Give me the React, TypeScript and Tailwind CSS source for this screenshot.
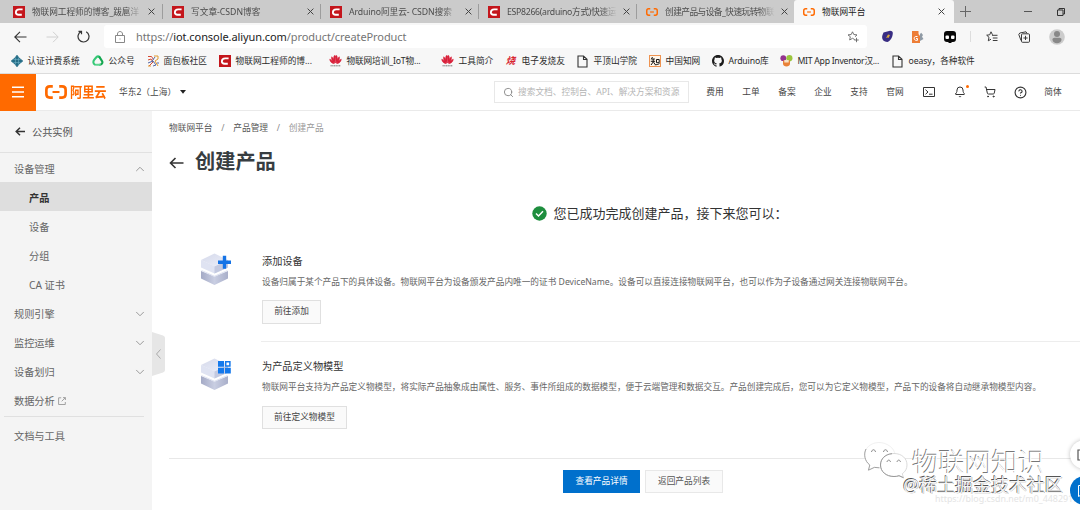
import React from "react";
import { ChevronDown, ChevronUp, Search, Bell, ShoppingCart, CircleHelp } from "lucide-react";

const CsdnIcon = () => (
  <svg width="12" height="12" viewBox="0 0 12 12" className="shrink-0">
    <rect width="12" height="12" fill="#c4161c" />
    <path d="M9.6 3.400H6.200C4.300 3.400 3 4.600 2.900 6.200c-.1 1.600.9 2.500 2.600 2.500h3.300" fill="none" stroke="#fff" strokeWidth="1.900" />
  </svg>
);

const AliMark = ({ w = 12, h = 8 }: { w?: number; h?: number }) => (
  <svg width={w} height={h} viewBox="0 0 24 15" preserveAspectRatio="none" className="shrink-0" fill="none" stroke="#ff6a00">
    <path d="M8.500 1.500H5.300C3 1.500 1.500 2.900 1.500 5v5c0 2.100 1.500 3.500 3.800 3.500h3.200" strokeWidth="2.900" />
    <path d="M15.500 1.500h3.200c2.300 0 3.800 1.400 3.800 3.500v5c0 2.100-1.500 3.500-3.800 3.500h-3.200" strokeWidth="2.900" />
    <path d="M8.200 7.500h7.600" strokeWidth="2.200" />
  </svg>
);

const CloseIcon = () => (
  <svg width="7" height="7" viewBox="0 0 7 7" className="shrink-0" stroke="#444" strokeWidth="1">
    <path d="M.6.6l5.800 5.800M6.400.6L.6 6.400" />
  </svg>
);

const PageIcon = () => (
  <svg width="11" height="13" viewBox="0 0 11 13" fill="none" stroke="#333" strokeWidth="1.100">
    <path d="M1 1h5.500L10 4.300V12H1zM6.500 1v3.500H10" />
  </svg>
);

const HuaweiIcon = () => (
  <svg width="13" height="12" viewBox="0 0 13 12" fill="#d9213a">
    <path d="M6.200 8C4.600 5.600 4.100 2.300 5.300.6c.7-.2 1 0 1.100.5zM6.800 8c1.600-2.400 2.100-5.700.9-7.400-.7-.2-1 0-1.100.5zM5.600 8.200C3.300 6.500 2 4 2.600 1.800c1.300.3 2.700 3 3 6.400zM7.400 8.200c2.300-1.700 3.600-4.200 3-6.400-1.300.3-2.700 3-3 6.400zM5.200 8.700C2.500 8.200.8 6.400.7 4.200c1.600.2 3.700 2 4.500 4.500zM7.800 8.700c2.700-.5 4.400-2.300 4.500-4.500-1.600.2-3.700 2-4.500 4.500z" stroke="#d9213a" strokeWidth=".5" />
    <path d="M1.500 10.800h10" stroke="#777" strokeWidth="1" strokeDasharray="1.300 .4" />
  </svg>
);

const LotIcon = () => (
  <svg width="12" height="12" viewBox="0 0 12 12">
    <path d="M6 .3L8 3l3.700 3L8 9 6 11.700 4 9 .3 6 4 3z" fill="#246c86" stroke="#246c86" />
    <path d="M2.500 4.400h7M2.500 7.600h7M4.400 2.500v7M7.600 2.500v7" stroke="#75b5c8" strokeWidth=".6" />
  </svg>
);

const GreenIcon = () => (
  <svg width="12" height="12" viewBox="0 0 12 12" fill="none" strokeWidth="2.100" strokeLinecap="round">
    <path d="M3 9.600C.8 8.500 1 6 2.400 4.500L4.600 2C5.500 1 6.700 1.200 7.500 2.200" stroke="#35c876" />
    <path d="M7.500 2.200l2.400 3.600c1.300 2-.1 4-2.100 4" stroke="#14a650" />
    <path d="M7.800 9.800H4.500" stroke="#5bd58e" />
  </svg>
);

const BreadIcon = () => (
  <svg width="12" height="12" viewBox="0 0 12 12" fill="none" strokeWidth="1">
    <path d="M1 1.500h3.500l2 3M1 5l3-1 2 3-4 4" stroke="#d64a34" />
    <path d="M7 1h4v3L8 6l3 5M1 11h3" stroke="#e19a2e" />
    <path d="M1 8l5-2 3 4-3 1M8 2l-3 4M11 7v2" stroke="#5268a8" />
  </svg>
);

const ShaoIcon = () => <span className="text-[9.5px] leading-none font-bold text-[#d8232f] italic">烧</span>;

const CnkiIcon = () => (
  <svg width="12" height="12" viewBox="0 0 12 12" fill="none">
    <rect x=".5" y=".5" width="11" height="11" fill="#fff6ea" stroke="#ee9350" />
    <path d="M3.500 2L2.300 4.300M2.500 4h3.400M1.800 6.300h4.300M4.200 4v3L2 10M4.600 7.200l1.500 2.300M7.500 4.500h2.700v3.200H7.500zM5.800 9.800c2 0 3-.3 4.700-1.200" stroke="#151515" strokeWidth="1" />
  </svg>
);

const GithubIcon = () => (
  <svg width="12" height="12" viewBox="0 0 16 16" fill="#1b1b1b">
    <path d="M8 0C3.580 0 0 3.580 0 8c0 3.540 2.290 6.530 5.470 7.590.4.070.55-.17.55-.38v-1.490c-2.230.48-2.700-1.070-2.700-1.070-.36-.92-.89-1.170-.89-1.170-.73-.5.050-.49.050-.49.8.060 1.230.83 1.230.83.71 1.220 1.870.87 2.330.66.070-.51.280-.87.5-1.070-1.770-.2-3.640-.89-3.640-3.950 0-.87.31-1.590.82-2.150-.08-.2-.36-1.020.08-2.120 0 0 .67-.21 2.200.82a7.600 7.600 0 0 1 4 0c1.530-1.040 2.200-.82 2.200-.82.44 1.100.16 1.920.08 2.120.51.560.82 1.270.82 2.150 0 3.070-1.870 3.750-3.650 3.950.29.250.54.730.54 1.480v2.200c0 .21.150.46.550.38A8 8 0 0 0 16 8c0-4.420-3.580-8-8-8z" />
  </svg>
);

const MitIcon = () => (
  <svg width="13" height="12" viewBox="0 0 13 12">
    <circle cx="3.300" cy="3.200" r="2.900" fill="#93338f" />
    <circle cx="9.400" cy="3.200" r="3.100" fill="#9bc53d" />
    <path d="M3 5.500h7v3.300c0 3.700-7 3.700-7 0z" fill="#e98238" />
    <path d="M4.300 5h4.400v2.500H4.300z" fill="#f6e2c9" />
  </svg>
);

const tabs = [
  { title: "物联网工程师的博客_跋扈洋", icon: <CsdnIcon />, cls: "w-[159px]", fit: "tracking-[-0.08px]" },
  { title: "写文章-CSDN博客", icon: <CsdnIcon />, cls: "w-[158px]", fit: "" },
  { title: "Arduino阿里云- CSDN搜索", icon: <CsdnIcon />, cls: "w-[158px]", fit: "tracking-[-0.08px]" },
  { title: "ESP8266(arduino方式)快速运", icon: <CsdnIcon />, cls: "w-[158px]", fit: "tracking-[-0.28px]" },
  { title: "创建产品与设备_快速玩转物联", icon: <AliMark />, cls: "w-[157px]", fit: "tracking-[-0.55px]" },
];

const bookmarks = [
  { label: "认证计费系统", icon: <LotIcon />, cls: "w-[81px]" },
  { label: "公众号", icon: <GreenIcon />, cls: "w-[55px]" },
  { label: "面包板社区", icon: <BreadIcon />, cls: "w-[72px]" },
  { label: "物联网工程师的博...", icon: <CsdnIcon />, cls: "w-[111px]" },
  { label: "物联网培训_IoT物...", icon: <HuaweiIcon />, cls: "w-[112px] tracking-[-0.15px]" },
  { label: "工具简介", icon: <HuaweiIcon />, cls: "w-[63px]" },
  { label: "电子发烧友", icon: <ShaoIcon />, cls: "w-[72px]" },
  { label: "平顶山学院", icon: <PageIcon />, cls: "w-[72px]" },
  { label: "中国知网", icon: <CnkiIcon />, cls: "w-[63px]" },
  { label: "Arduino库", icon: <GithubIcon />, cls: "w-[69px] tracking-[-0.15px]" },
  { label: "MIT App Inventor汉...", icon: <MitIcon />, cls: "w-[111px] tracking-[-0.28px]" },
  { label: "oeasy，各种软件", icon: <PageIcon />, cls: "w-[100px] tracking-[-0.1px]" },
];

function TabStrip() {
  return (
    <div className="flex h-[23px] bg-[#cbcbcb] pl-1 text-[8.7px] text-[#4c4c4c]">
      {tabs.map((t, i) => (
        <div key={t.title} className={`flex h-full items-center pl-[9px] ${t.cls}`}>
          {t.icon}
          <div className={`ml-[7px] w-[110px] leading-4 whitespace-nowrap [mask-image:linear-gradient(90deg,#000_85%,transparent)] ${t.fit}`}>{t.title}</div>
          <div className="ml-[6px]"><CloseIcon /></div>
          {i < 4 && <div className="ml-auto h-[15px] w-px bg-[#9d9d9d]" />}
        </div>
      ))}
      <div className="flex h-full w-[160px] items-center rounded-t-[3px] bg-[#f7f7f7] pl-[9px] text-[#222]">
        <AliMark />
        <div className="ml-[7px] w-[109px] leading-4">物联网平台</div>
        <div className="ml-[7px]"><CloseIcon /></div>
      </div>
      <div className="flex flex-1 items-center">
        <svg width="11" height="11" viewBox="0 0 11 11" className="ml-[6px]" stroke="#666"><path d="M5.500 0v11M0 5.500h11" /></svg>
        <svg width="8" height="8" viewBox="0 0 8 8" className="ml-[53px]" stroke="#555"><path d="M0 3.500h8" /></svg>
        <svg width="8" height="8" viewBox="0 0 8 8" className="ml-[25px]" fill="none" stroke="#333"><path d="M.5 2h5.500v5.500H.5zM2 2V.5h5.500V6H6" /></svg>
      </div>
    </div>
  );
}

function AddressBar() {
  return (
    <div className="flex h-[27px] items-center bg-[#f7f7f7]">
      <svg width="13" height="12" viewBox="0 0 13 12" className="ml-[14px]" fill="none" stroke="#333" strokeWidth="1.100"><path d="M12.500 6H1M6 .8L.8 6 6 11.200" /></svg>
      <svg width="13" height="12" viewBox="0 0 13 12" className="ml-[19px]" fill="none" stroke="#d0d0d0"><path d="M.5 6H12M7 .8L12.200 6 7 11.200" /></svg>
      <svg width="13" height="13" viewBox="0 0 13 13" className="ml-[18px]" fill="none" stroke="#333" strokeWidth="1.200"><path d="M4 1.600A5.500 5.500 0 1 0 9.200 1.700M1.500 1.300h3v3" /></svg>
      <div className="ml-[14px] flex h-[23px] w-[763px] items-center rounded-[3px] bg-white">
        <svg width="10" height="12" viewBox="0 0 10 12" className="ml-[11px]" fill="none" stroke="#888"><path d="M.5 4.500h9v7h-9zM2.500 4.500V3c0-3.300 5-3.300 5 0v1.500M4.500 8h1" /></svg>
        <div className="ml-[11px] w-[705px] text-[11px] leading-4 tracking-[-0.08px] text-[#757575]">https://<span className="text-[#222]">iot.console.aliyun.com</span>/product/createProduct</div>
        <svg width="12" height="12" viewBox="0 0 12 12" className="ml-[6px]" fill="none" stroke="#666" strokeWidth=".9"><path d="M7.800 8.600L5.500 7.300 2.700 9l.6-3.300L1 3.900l3.200-.4L5.500.8l1.300 2.700 3.200.4-2 1.800M9.500 6.800v4.400M7.300 9h4.400" /></svg>
      </div>
      <svg width="13" height="13" viewBox="0 0 13 13" className="ml-[14px]"><path d="M2.500 2.500L9 .8c2 0 3 1 2.800 2.700-.2 3.500-2.300 7.500-5.300 8.500C2 11.700.3 8.700 1.500 5z" fill="#392d83" /><path d="M7 4.500l2 .5-1.500 3-1-.5-1.500.5z" fill="#d9a93b" /></svg>
      <svg width="12" height="12" viewBox="0 0 12 12" className="ml-[18px]"><path d="M0 0h6.500v3L8 5v7H0z" fill="#ed7d36" /><path d="M5.500 5.500H3.800c-2.200 0-2.200 3.800 0 3.800h1.700V7.500H4" fill="none" stroke="#fff" /><path d="M8 3l1.200-1.200L11 4l-1 1.800L11.500 8 8 10z" fill="#8f9aa5" /></svg>
      <svg width="12" height="12" viewBox="0 0 12 12" className="ml-[20px]"><rect width="12" height="11" rx="3" fill="#080808" /><rect x="1.500" y="4.500" width="3.500" height="3.500" rx="1" fill="#fff" /><rect x="7" y="4.500" width="3.500" height="3.500" rx="1" fill="#fff" /><path d="M4.500 10.500h3V12h-3z" fill="#080808" /></svg>
      <div className="ml-[14px] h-[11px] w-px bg-[#ddd]" />
      <svg width="12" height="12" viewBox="0 0 12 12" className="ml-[15px]" fill="none" stroke="#333" strokeWidth=".95"><path d="M6.500 3.800L5 .8 3.700 3.800.7 4.200 3 6.300l-.7 3.500L5 8.200M6 4.300h5.500M6.800 7h4.700M6.800 9.500h4.700" /></svg>
      <svg width="12" height="12" viewBox="0 0 12 12" className="ml-[20px]" fill="none" stroke="#333" strokeWidth=".95"><rect x="3.500" y="2.800" width="8" height="8.500" rx="1" /><path d="M3 9.500L.8 3.500l1-1.500L8 .8l1 1.500M7.500 4.800V9M5.400 7h4.200" /></svg>
      <svg width="16" height="16" viewBox="0 0 16 16" className="ml-[19px]"><circle cx="8" cy="8" r="7.800" fill="#ccc" /><circle cx="8" cy="5" r="3" fill="#888" /><path d="M3.500 10.500c0-1 .8-1.700 2-1.700h5c1.200 0 2 .7 2 1.700 0 5-9 5-9 0z" fill="#888" /></svg>
    </div>
  );
}

function Bookmarks() {
  return (
    <div className="flex h-[24px] items-center border-b border-[#dcdcdc] bg-[#f7f7f7] pb-px pl-[10px] text-[8.7px] text-[#2b2b2b]">
      {bookmarks.map((b) => (
        <div key={b.label} className={`flex shrink-0 items-center whitespace-nowrap ${b.cls}`}>
          <span className="flex w-[13px] shrink-0 justify-center">{b.icon}</span>
          <span className="ml-[4.5px] leading-4">{b.label}</span>
        </div>
      ))}
    </div>
  );
}

function ConsoleHeader() {
  return (
    <header className="flex h-[37px] items-center border-b border-[#eaeaea] bg-white text-[8.7px] text-[#444]">
      <div className="flex h-[37px] w-9 items-center justify-center bg-[#ff6a00]">
        <svg width="12" height="12" viewBox="0 0 12 12" stroke="#fff" strokeWidth="1.500"><path d="M0 1.200h12M0 6h12M0 10.800h12" /></svg>
      </div>
      <div className="ml-[9px] flex w-[74px] items-center">
        <AliMark w={22} h={14} />
        <span className="ml-[3px] scale-y-115 text-[12.2px] leading-4 font-semibold whitespace-nowrap text-[#ff6a00]">阿里云</span>
      </div>
      <span className="w-[61px] leading-4 whitespace-nowrap">华东2（上海）</span>
      <svg width="6" height="4" viewBox="0 0 6 4"><path d="M0 0h6L3 3.800z" fill="#222" /></svg>
      <div className="ml-[308px] flex h-[22px] w-[195px] items-center border border-[#e8e8e8] pl-2">
        <Search size={11} color="#888" strokeWidth={2} />
        <span className="ml-[4px] leading-4 whitespace-nowrap text-[#b5b5b5]">搜索文档、控制台、API、解决方案和资源</span>
      </div>
      <nav className="ml-[8px] flex">
        {["费用", "工单", "备案", "企业", "支持", "官网"].map((n) => (
          <span key={n} className="w-9 text-center leading-4">{n}</span>
        ))}
      </nav>
      <div className="ml-[1px] grid w-[122px] grid-cols-4 place-items-center">
        <svg width="12" height="10" viewBox="0 0 12 10" fill="none" stroke="#333"><path d="M.5.5h11v9H.5zM2.500 2.700L5 5 2.500 7.300M6 7.200h3.500" /></svg>
        <div className="relative">
          <Bell size={12} color="#333" strokeWidth={2} />
          <span className="absolute -top-[1px] -right-[3px] size-[3px] rounded-full bg-[#ff6a00]" />
        </div>
        <ShoppingCart size={12} color="#333" strokeWidth={2} />
        <CircleHelp size={13} color="#333" strokeWidth={2.100} />
      </div>
      <span className="w-[34px] text-center leading-4">简体</span>
    </header>
  );
}

const SubItem = ({ label, active }: { label: string; active?: boolean }) => (
  <div className={`flex h-[29px] items-center pt-[3px] pl-[29px] ${active ? "bg-[#dedede] font-bold text-[#333]" : ""}`}>{label}</div>
);

const Group = ({ label }: { label: string }) => (
  <div className="flex h-[29px] items-center justify-between pt-[3px] pr-[5px] pl-[14px]">
    {label}
    <ChevronDown size={14} color="#999" strokeWidth={1.700} />
  </div>
);

function Sidebar() {
  return (
    <aside className="h-full w-[152px] shrink-0 bg-[#f4f4f4] text-[10.2px] leading-4 text-[#666]">
      <div className="flex h-[42px] items-center border-b border-[#e1e1e1] pl-[15px] text-[#555]">
        <svg width="10" height="9" viewBox="0 0 10 9" fill="none" stroke="#333" strokeWidth="1.500"><path d="M10 4.500H1.200M5 .7L1.200 4.500 5 8.300" /></svg>
        <span className="ml-[7px]">公共实例</span>
      </div>
      <div className="flex h-[29px] items-center justify-between pt-[3px] pr-[5px] pl-[14px]">
        设备管理
        <ChevronUp size={14} color="#999" strokeWidth={1.700} />
      </div>
      <SubItem label="产品" active />
      <SubItem label="设备" />
      <SubItem label="分组" />
      <SubItem label="CA 证书" />
      <Group label="规则引擎" />
      <Group label="监控运维" />
      <Group label="设备划归" />
      <div className="flex h-[31px] items-center pt-px pl-[14px]">
        数据分析
        <svg width="8" height="8" viewBox="0 0 8 8" className="ml-[3px]" fill="none" stroke="#999" strokeWidth=".9"><path d="M3.200.8H.6v6.700h6.700V5M5 .6h2.400V3M7.300.7L3.700 4.300" /></svg>
      </div>
      <div className="mr-2 ml-1 border-t border-[#e0e0e0]" />
      <div className="flex h-[38px] items-center pl-[14px]">文档与工具</div>
    </aside>
  );
}

const Cube = ({ kind }: { kind: "plus" | "grid" }) => (
  <svg width="32" height="34" viewBox="0 0 32 34" className="shrink-0">
    <defs>
      <linearGradient id={`top-${kind}`} x1="0" y1="0" x2="1" y2="1"><stop stopColor="#d5d9ea" /><stop offset="1" stopColor="#eceffa" /></linearGradient>
      <linearGradient id={`side-${kind}`} x1="0" y1="0" x2="1" y2="0"><stop stopColor="#a4aac6" /><stop offset=".5" stopColor="#c9cee2" /><stop offset="1" stopColor="#a9afca" /></linearGradient>
    </defs>
    <path d="M1 18v7.500L14.500 32 28 25.500V18l-13.500 5.500z" fill={`url(#side-${kind})`} />
    <path d="M1 17.500l13.500-5L28 17.500 14.500 24z" fill="#dde1f0" />
    <path d="M1 7v9l13.500 6L28 16V7l-13.500 6z" fill="#fff" stroke="#fff" strokeWidth="1.200" />
    <path d="M1 7v7.500l13.500 6L28 14.500V7l-13.500 6z" fill="#dfe3f2" />
    <path d="M14.500 13v7.500l13.500-6V7z" fill="#c3c9e0" />
    <path d="M1 7L14.500.5 28 7l-13.500 6.500z" fill={`url(#top-${kind})`} />
    {kind === "plus" ? (
      <path d="M24.500 2.800v13M18 9.300h13" stroke="#1573e6" strokeWidth="3.400" />
    ) : (
      <g fill="#1479ec">
        <path d="M18 3h6v5.800h-6zM18 9.800h6v5.800h-6zM25 9.800h5.800v5.800H25z" />
        <path d="M25.700 3.800h4.200V8h-4.200z" fill="#fff" stroke="#1479ec" strokeWidth="1.500" />
      </g>
    )}
  </svg>
);

function Step({ kind, title, text, action, actionClass }: { kind: "plus" | "grid"; title: string; text: string; action: string; actionClass: string }) {
  return (
    <section className="flex h-full">
      <div className="w-[62px]"><Cube kind={kind} /></div>
      <div className="flex-1">
        <h2 className="text-[10.2px] leading-[16px] text-[#333]">{title}</h2>
        <p className="mt-[5px] text-[8.67px] leading-[16px] whitespace-nowrap text-[#666]">{text}</p>
        <button className={`flex items-center justify-center border border-[#e0e0e0] bg-[#fafafa] text-[8.7px] text-[#444] ${actionClass}`}>{action}</button>
      </div>
    </section>
  );
}

function Watermarks() {
  return (
    <div className="pointer-events-none absolute inset-0 overflow-hidden">
      <svg width="46" height="38" viewBox="0 0 46 38" className="absolute top-[441px] left-[863px]" fill="#fff">
        <path d="M16 1.500C8 1.500 1.500 7 1.500 14c0 4 2 7.600 5.300 10l-.9 5 5.500-2.800c11 2.300 20.500-3 20.500-12.200 0-7-8.200-12.500-15.900-12.500z" stroke="#e9e9e9" strokeWidth=".7" />
        <path d="M3 8C.5 13 1.500 20 6.800 24l-1.400 5.200 6-2.800 5 .4" fill="none" stroke="#999" strokeWidth=".9" />
        <path d="M31 12.500c-8 0-13.500 5-13.500 11.500S23 35.500 31 35.500c2 0 3.500-.2 5-.8l4.500 2-1.200-4c3.300-2.200 4.700-5.300 4.700-8.700 0-6.500-5-11.500-13-11.500z" stroke="#ccc" strokeWidth=".7" />
        <path d="M29 12.700c-7 .5-11.500 5.300-11.500 11.300 0 6.500 5.500 11.500 13.500 11.500 2 0 3.500-.2 5-.8l4.500 2" fill="none" stroke="#999" strokeWidth="1" />
        <path d="M8.500 11c.5-3 3.500-3 4 0M20.500 11c.5-3 3.500-3 4 0M24 21c.5-2.500 3-2.500 3.500 0M34 21c.5-2.500 3-2.500 3.500 0" fill="none" stroke="#888" strokeWidth="1" />
      </svg>
      <div className="absolute top-[444px] left-[912px] text-[26.5px] leading-[36px] font-light whitespace-nowrap text-white [text-shadow:-0.8px_-0.6px_0.3px_#777]">物联网知识</div>
      <div className="absolute top-[493px] left-[935px] text-[8.9px] leading-3 whitespace-nowrap text-[#e4e4e4]">https://blog.csdn.net/m0_44829198</div>
      <div className="absolute top-[472px] left-[903px] text-[18px] leading-[26px] tracking-[-0.05px] whitespace-nowrap text-[#f4f4f4] [text-shadow:-0.7px_-0.7px_0.3px_#555,0.4px_0.4px_0.4px_#999]">@稀土掘金技术社区</div>
      <div className="absolute top-[440px] left-[1070px] flex size-[29px] items-center rounded-full bg-white pl-[7px] shadow-[0_0_4px_rgba(0,0,0,0.25)]">
        <svg width="12" height="12" viewBox="0 0 12 12" fill="none" stroke="#555" strokeWidth="1.200"><path d="M1 1h10v10H1z" /></svg>
      </div>
      <div className="absolute top-[476px] left-[1070px] flex size-[29px] items-center rounded-full bg-[#0070cc] pl-[8px]">
        <svg width="12" height="12" viewBox="0 0 12 12" fill="none" stroke="#fff" strokeWidth="1"><path d="M.5.5h11v9H4l-3.500 2zM3 4h6M3 6.500h6" /></svg>
      </div>
    </div>
  );
}

export default function App() {
  return (
    <div lang="zh-CN" className="relative flex h-[510px] w-[1080px] flex-col overflow-hidden bg-white font-['Noto_Sans','Noto_Sans_CJK_SC',sans-serif]">
      <TabStrip />
      <AddressBar />
      <Bookmarks />
      <ConsoleHeader />
      <div className="flex min-h-0 flex-1">
        <Sidebar />
        <div className="flex w-[17px] shrink-0 flex-col">
          <svg width="13" height="44" viewBox="0 0 13 44" className="mt-[221px]"><path d="M0 0l11 3.500q2 .7 2 2.500v32q0 1.800-2 2.500L0 44z" fill="#e6e6e6" /><path d="M8.500 17.500L4.500 22l4 4.500" fill="none" stroke="#aaa" /></svg>
        </div>
        <main className="flex flex-1 flex-col">
          <div className="mt-[10px] flex h-4 items-center text-[8.7px] text-[#555]">
            <span>物联网平台</span>
            <span className="mx-[8.8px] text-[#888]">/</span>
            <span>产品管理</span>
            <span className="mx-[8.8px] text-[#888]">/</span>
            <span className="text-[#999]">创建产品</span>
          </div>
          <div className="mt-[9px] flex h-[30px] items-center">
            <svg width="15" height="12" viewBox="0 0 15 12" className="mt-[4px]" fill="none" stroke="#333" strokeWidth="1.600"><path d="M14.500 6H1.500M6.500 1l-5 5 5 5" /></svg>
            <h1 className="ml-[11px] text-[20.2px] leading-[30px] font-bold text-[#373d41]">创建产品</h1>
          </div>
          <div className="mt-[27px] ml-[363px] flex h-5 items-center">
            <svg width="15" height="15" viewBox="0 0 15 15"><circle cx="7.500" cy="7.500" r="7.200" fill="#1e8e3e" /><path d="M4 7.500l2.500 2.500L11 5.300" fill="none" stroke="#fff" strokeWidth="1.500" /></svg>
            <span className="ml-[6.5px] text-[13px] leading-5 text-[#333]">您已成功完成创建产品，接下来您可以：</span>
          </div>
          <div className="mt-[30px] h-[88px] pl-[31px]">
            <Step kind="plus" title="添加设备" text="设备归属于某个产品下的具体设备。物联网平台为设备颁发产品内唯一的证书 DeviceName。设备可以直接连接物联网平台，也可以作为子设备通过网关连接物联网平台。" action="前往添加" actionClass="mt-[10px] h-[24px] w-[59px]" />
          </div>
          <div className="ml-[92px] border-t border-[#ededed]" />
          <div className="mt-[16px] h-[100px] pl-[31px]">
            <Step kind="grid" title="为产品定义物模型" text="物联网平台支持为产品定义物模型，将实际产品抽象成由属性、服务、事件所组成的数据模型，便于云端管理和数据交互。产品创建完成后，您可以为它定义物模型，产品下的设备将自动继承物模型内容。" action="前往定义物模型" actionClass="mt-[11px] h-[23px] w-[85px]" />
          </div>
          <div className="border-t border-[#e8e8e8]" />
          <div className="mt-[11px] ml-[394px] flex gap-[5px] text-[8.7px]">
            <button className="h-[23px] w-[77px] bg-[#0070cc] text-white">查看产品详情</button>
            <button className="h-[23px] w-[78px] border border-[#e8e8e8] bg-[#fafafa] text-[#555]">返回产品列表</button>
          </div>
        </main>
      </div>
      <Watermarks />
    </div>
  );
}
